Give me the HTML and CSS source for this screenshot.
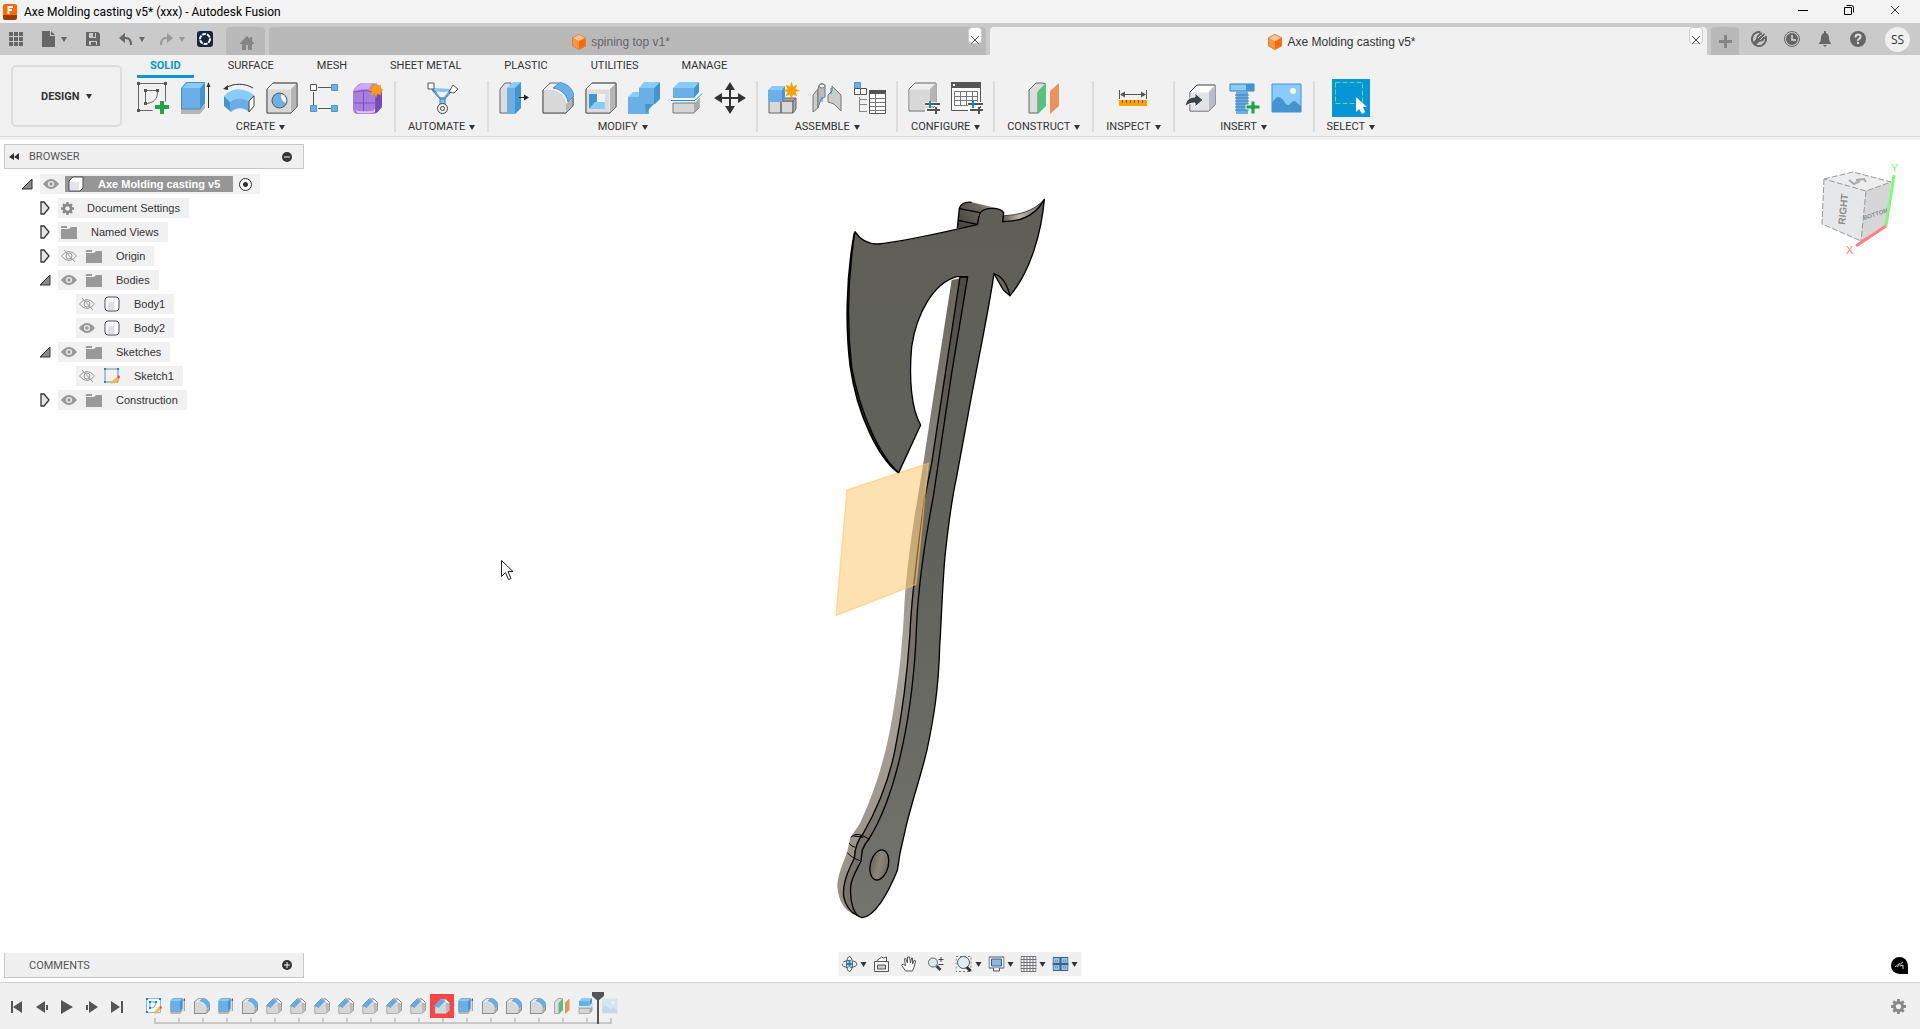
FILE: index.html
```html
<!DOCTYPE html>
<html lang="en">
<head>
  <meta charset="UTF-8">
  <meta name="viewport" content="width=device-width, initial-scale=1.0">
  <title>Axe Molding casting v5* (xxx) - Autodesk Fusion</title>
  <link rel="stylesheet" href="styles.css">
</head>
<body>

<!-- icon sprite -->
<svg class="sprite" aria-hidden="true">
  <symbol id="cube" viewBox="0 0 16 16">
    <path d="M8 0l7 3.5L8 7 1 3.500z" fill="#ffc59c"/><path d="M1 3.500L8 7v9l-7-4z" fill="#ff934a"/><path d="M15 3.500L8 7v9l7-4z" fill="#ff6a00"/>
    <path d="M8 .5l6.500 3.200v8L8 15.500l-6.500-3.800v-8z" fill="none" stroke="#d9823f"/>
  </symbol>
  <symbol id="sketch" viewBox="0 0 32 32">
    <path d="M1.500 1.500h27v18M1.500 1.500v27h14" fill="none" stroke="#666"/>
    <path d="M8.500 8.500h12M8.500 8.500v13M20.500 10c0 7-4 11-11 11.500" fill="none" stroke="#666"/>
    <path d="M0 0h3v3H0zM27 0h3v3h-3zM0 27h3v3H0zM7 7h3v3H7zM19 7h3v3h-3zM7 20h3v3H7z" fill="#555"/>
    <path d="M23 19h4v4h5v4h-5v5h-4v-5h-5v-4h5z" fill="#1fa54a"/>
  </symbol>
  <symbol id="extrude" viewBox="0 0 32 32">
    <path d="M1 27h19l5-5v4l-5 6H1z" fill="#b5b5b5"/>
    <path d="M1 6h19v21H1z" fill="#6ab0e6"/><path d="M1 6l5-6h19l-5 6z" fill="#88cbff"/><path d="M20 6l5-6v21l-5 6z" fill="#4494cf"/>
    <path d="M1.500 6.500l5-6h18v20.500l-4.500 6h-18.500z" fill="none" stroke="#4b8fc2"/>
    <path d="M28.500 4v22" stroke="#333"/><path d="M28.500 0l2 5h-4z" fill="#333"/>
  </symbol>
  <symbol id="revolve" viewBox="0 0 32 32">
    <path d="M3 6c7-5 19-5 27 0" fill="none" stroke="#333"/><path d="M0 7l5-4v5z" fill="#333"/>
    <path d="M1 14c8-9 21-9 31 0l-6 6c-6-5-13-5-19 0z" fill="#88cbff"/><path d="M7 20c6-5 13-5 19 0v10c-6-5-12-5-18 0z" fill="#6ab0e6"/><path d="M1 14l6 6 1 10-7-6z" fill="#4494cf"/>
    <path d="M26 19l5-5v10l-5 6z" fill="#fff" stroke="#444"/>
  </symbol>
  <symbol id="hole" viewBox="0 0 32 32">
    <path d="M1 7l6-6h24v24l-6 6H1z" fill="#eee" stroke="#666"/><path d="M25 7l6-6v24l-6 6z" fill="#b5b5b5"/><path d="M1.500 7.500h23V31h-23z" fill="#d8d8d8"/>
    <circle cx="13.500" cy="18.500" r="7.500" fill="#6ab0e6" stroke="#555"/><path d="M15 12a7 7 0 0 1 5 9 8 8 0 0 1-5-9z" fill="#f5f5f5"/>
    <path d="M1 7l6-6h24v24l-6 6H1z" fill="none" stroke="#666"/>
  </symbol>
  <symbol id="pattern" viewBox="0 0 32 32">
    <path d="M9 5.500h13M9 26.500h13M4.500 10v13" stroke="#555"/><path d="M1.500 2.500h6v6h-6z" fill="#fff" stroke="#555"/>
    <path d="M22.500 2.500h6v6h-6zM1.500 23.500h6v6h-6zM22.500 23.500h6v6h-6z" fill="#6ab0e6" stroke="#4b94ce"/>
  </symbol>
  <symbol id="star" viewBox="0 0 16 16">
    <path d="M8 0l1.500 4.300L13.600 2.400l-1.900 4.100L16 8l-4.300 1.500 1.900 4.100-4.100-1.900L8 16l-1.500-4.300-4.100 1.900 1.900-4.100L0 8l4.300-1.500-1.900-4.100 4.100 1.900z" fill="#fa9f00"/>
  </symbol>
  <symbol id="form" viewBox="0 0 32 32">
    <path d="M1 10q0-3 3-5 3-4 7-4h10q9 2 9 8v15q0 2-3 4-2 4-6 4H6q-5 0-5-5z" fill="#a87fe0"/><path d="M2 9q1-3 4-5 3-3 6-3h9l-4 6q-9 0-15 2z" fill="#c9aaf5"/><path d="M24 12l6-1v12q0 3-2 4-2 4-5 4z" fill="#7749b5"/>
    <path d="M2 21h22M11.500 9v22M2 10q10-3 21 0 2 10 0 21" fill="none" stroke="#7d50bb"/>
    <path d="M3 28q4 2 18 1l2-3v4q-4 2-17 1z" fill="#dcc8fa"/>
    <use href="#star" x="16" y="0" width="16" height="16"/>
  </symbol>
  <symbol id="automate" viewBox="0 0 32 32">
    <path d="M6 6c4 6 6 9 8 10v8c-1 4 5 4 5 0v-8c2-1 4-4 8-9" fill="#85c6f6" stroke="#3a7fb5" stroke-width="1"/><path d="M6 8q10 6 20 0l-7 9h-5z" fill="#6ab0e6" stroke="#3a7fb5"/><path d="M10 9q6 2 13 0l-5 6h-4z" fill="#f1f1f1"/>
    <path d="M2 1h6v6H2z" fill="#fff" stroke="#555"/><path d="M27 3l5 4-4 4-5-1z" fill="#fff" stroke="#555"/>
    <circle cx="16.500" cy="26.500" r="5" fill="#eee" stroke="#444"/><circle cx="16.500" cy="26.500" r="2" fill="none" stroke="#444"/>
  </symbol>
  <symbol id="presspull" viewBox="0 0 32 32">
    <path d="M1 7l5-6h6v30H1z" fill="#ddd" stroke="#666"/><path d="M8 6l6-6h8v26l-6 6H8z" fill="#88cbff"/><path d="M8 6h8v26H8z" fill="#6ab0e6"/><path d="M16 6l6-6v26l-6 6z" fill="#4494cf"/>
    <path d="M20 15.500h7" stroke="#222"/><path d="M25 12.500l5 3-5 3z" fill="#222"/>
  </symbol>
  <symbol id="fillet" viewBox="0 0 32 32">
    <path d="M1 8l7-7h8c10 2 15 8 15 15v8l-7 7H1z" fill="#f0f0f0" stroke="#666"/><path d="M1.500 8H11c9 2 13 8 13 14v8.500H1.500z" fill="#d8d8d8"/><path d="M24 22l7-6v8l-7 7z" fill="#b5b5b5"/>
    <path d="M11 6l7-5.500C27 2 31 8 32 14l-6 6C25 13 19 7 11 6z" fill="#6ab0e6" stroke="#4b94ce"/>
    <path d="M8 1L1 8v23h23l7-7v-8" fill="none" stroke="#666"/>
  </symbol>
  <symbol id="shell" viewBox="0 0 32 32">
    <path d="M1 7l6-6h24v24l-6 6H1z" fill="#f3f3f3" stroke="#666"/><path d="M25 7l6-6v24l-6 6z" fill="#b5b5b5"/><path d="M1.500 7.500h23V31h-23z" fill="#ddd"/>
    <path d="M4 12h16v15H4z" fill="#f7f7f7"/><path d="M4 12h8v9l-8 6z" fill="#4494cf"/><path d="M4 27l6-7h10v7z" fill="#88cbff"/><path d="M12 12h8v8h-8z" fill="#f1f1f1"/>
    <path d="M1 7l6-6h24v24l-6 6H1z" fill="none" stroke="#666"/>
  </symbol>
  <symbol id="combine" viewBox="0 0 32 32">
    <path d="M0 15h11V6h15v16h-5v10H0z" fill="#6ab0e6"/><path d="M0 15l5-5h6v5zM11 6l5-6h16l-6 6z" fill="#88cbff"/><path d="M26 6l6-6v17l-5 5h-1zM17 22h9l-4 4v0l-4 6z" fill="#4494cf"/>
  </symbol>
  <symbol id="split" viewBox="0 0 32 32">
    <path d="M2 21h21l5-5v10l-5 5H2z" fill="#d5d5d5" stroke="#777"/><path d="M23 21l5-5v10l-5 5z" fill="#aaa"/>
    <path d="M2 6h21v10H2z" fill="#6ab0e6"/><path d="M2 6l6-6h20l-5 6z" fill="#88cbff"/><path d="M23 6l5-6v10l-5 6z" fill="#4494cf"/>
    <path d="M0 18.500h24l7-7" fill="none" stroke="#fff" stroke-width="3"/><path d="M0 18.500h24l7-7" fill="none" stroke="#008fe0"/>
  </symbol>
  <symbol id="move" viewBox="0 0 32 32">
    <path d="M16 4v24M4 16h24" stroke="#333" stroke-width="2"/><path d="M16 0l5 8H11zM16 32l5-8H11zM0 16l8-5v10zM32 16l-8-5v10z" fill="#333"/>
  </symbol>
  <symbol id="component" viewBox="0 0 32 32">
    <path d="M1 19h12v12H1zM13 19h12v12H13z" fill="#d8d8d8" stroke="#666"/><path d="M13 19l4-3h11l-3 3zM25 19l3-3v11l-3 4z" fill="#aaa" stroke="#666"/>
    <path d="M0 8h14v12H0z" fill="#6ab0e6"/><path d="M0 8l4-4h13l-3 4z" fill="#88cbff"/><path d="M14 8l3-4v11l-3 4z" fill="#4494cf"/>
    <use href="#star" x="15" y="0" width="17" height="17"/>
  </symbol>
  <symbol id="joint" viewBox="0 0 32 32">
    <path d="M2 13l5-6v19l-5 4zM30 13l-9-9v5l-4 4v7l6 2 7 7z" fill="#ccc" stroke="#777"/><path d="M7 8l1-5q3-3 6 0v12l-4 2-3 9z" fill="#bbb" stroke="#777"/><ellipse cx="11" cy="4" rx="3" ry="2" fill="#eee" stroke="#777"/>
    <path d="M11 15v5M20 6v6" stroke="#008fe0"/>
  </symbol>
  <symbol id="bom" viewBox="0 0 32 32">
    <path d="M.5.500h6v6h-6z" fill="#6ab0e6" stroke="#4b94ce"/><path d="M.5 6.500h6v6h-6zM6.500 6.500h6v6h-6z" fill="#fff" stroke="#555"/>
    <path d="M5.500 15v15M6 17.500h7M6 22.500h7M6 29.500h7" fill="none" stroke="#888"/>
    <path d="M15.500 9.500h16v22h-16z" fill="#fff" stroke="#555"/><path d="M15 8h17v4H15z" fill="#555"/><path d="M16 16.500h15M16 20.500h15M16 24.500h15M16 28.500h15M21.500 12v19" stroke="#777"/>
  </symbol>
  <symbol id="sliders" viewBox="0 0 16 14">
    <path d="M0 4h15M0 10h15" stroke="#fff" stroke-width="4"/><path d="M0 4h15M2 10h14" stroke="#555" stroke-width="2"/><path d="M5 1v7" stroke="#008fe0" stroke-width="2"/><path d="M11 7v7" stroke="#555" stroke-width="2"/>
  </symbol>
  <symbol id="configure" viewBox="0 0 32 32">
    <path d="M1 7l6-6h21v22l-6 6H1z" fill="#eee" stroke="#666"/><path d="M22 7l6-6v22l-6 5z" fill="#b5b5b5"/><path d="M1.500 7.500H22v20.500H1.500z" fill="#d8d8d8"/>
    <use href="#sliders" x="17" y="18" width="16" height="14"/>
  </symbol>
  <symbol id="configtable" viewBox="0 0 32 32">
    <path d="M.5 2.500h29v26H.5z" fill="#fff" stroke="#555"/><path d="M0 0h30v6H0z" fill="#555"/><path d="M2 2h2v2H2z" fill="#fff"/>
    <path d="M3.500 9.500h23v14h-23zM3.500 14.500h23M3.500 18.500h23M9.500 9v15M15.500 9v15M21.500 9v15" fill="none" stroke="#777"/>
    <use href="#sliders" x="17" y="18" width="16" height="14"/>
  </symbol>
  <symbol id="plane" viewBox="0 0 32 32">
    <path d="M1 8l7-7h6l4 1-8 8v21H1z" fill="#ddd" stroke="#666"/><path d="M10 9l8-8v23l-8 8z" fill="#54c47c"/><path d="M22 9l9-8v23l-9 8z" fill="#e9935b"/>
  </symbol>
  <symbol id="measure" viewBox="0 0 32 32">
    <path d="M2.500 8v9M29.500 8v9M4 12.500h24" stroke="#555"/><path d="M3 12.500l5-3v6zM29 12.500l-5-3v6z" fill="#555"/>
    <path d="M2 18h28v6H2z" fill="#faa200"/><path d="M5.500 18v3M9.500 18v3M13.500 18v3M17.500 18v3M21.500 18v3M25.500 18v3" stroke="#7a5200"/>
  </symbol>
  <symbol id="derive" viewBox="0 0 32 32">
    <path d="M5 10l7-7h18v20l-6 6H5z" fill="#fff" stroke="#3c434d"/><path d="M24 10l6-7v20l-6 6z" fill="#b8bcc6"/><path d="M5.500 10.500H24v18H5.500z" fill="#e1e3e9"/>
    <path d="M0 25c1-8 5-10 10-10v-4l8 7-8 7v-4c-4 0-7 1-10 4z" fill="#3c434d" stroke="#fff"/>
  </symbol>
  <symbol id="bolt" viewBox="0 0 32 32">
    <path d="M2 2h24v7H2z" fill="#88cbff" stroke="#3c7db1"/><path d="M18 2h8v7h-8z" fill="#4494cf"/><path d="M8 9h12v23H8z" fill="#6ab0e6"/>
    <path d="M7 13h14M7 16h14M7 19h14M7 22h14M7 25h14M7 28h14" stroke="#3c7db1"/><path d="M23 19h4v4h5v4h-5v5h-4v-5h-5v-4h5z" fill="#1fa54a" stroke="#eee"/>
  </symbol>
  <symbol id="image" viewBox="0 0 32 32">
    <path d="M1 2h29v28H1z" fill="#88cbff" stroke="#4494cf"/><circle cx="22" cy="9" r="3" fill="#fff5cc"/>
    <path d="M1 21c6-10 9-6 14 1 2 2 3 1 5-1q4-4 6 0l4 3v6H1z" fill="#4494cf"/>
  </symbol>
  <symbol id="select" viewBox="0 0 38 38">
    <path d="M3.500 3.500h27v21h-27z" fill="none" stroke="#5fdc7e" stroke-dasharray="5 2"/><path d="M24 18v15l3-3 3 5 3-2-2-5h4z" fill="#fff"/>
  </symbol>
  <symbol id="chamfer" viewBox="0 0 32 32">
    <path d="M2 14L14 2h10l7 7v15l-7 7H2z" fill="#eee" stroke="#888" stroke-width="2"/><path d="M3 20l8-2L22 9h2v22H3z" fill="#d6d6d6"/><path d="M24 9l7 2v13l-7 7z" fill="#bbb"/>
    <path d="M0 16L13 3h5l5 3L9 20z" fill="#63ade6"/>
  </symbol>
  <symbol id="eye" viewBox="0 0 16 12">
    <path d="M0 6q4-5 8-5t8 5q-4 5-8 5T0 6z" fill="#999"/><circle cx="8" cy="6" r="3" fill="#eee"/><circle cx="8" cy="6" r="1.800" fill="#999"/>
  </symbol>
  <symbol id="eyeoff" viewBox="0 0 16 12">
    <path d="M.5 6Q4 1.500 8 1.500T15.500 6Q12 10.500 8 10.500T.5 6z" fill="none" stroke="#999"/><circle cx="8" cy="6" r="3" fill="none" stroke="#999"/><path d="M3 0l11 12" stroke="#999"/>
  </symbol>
  <symbol id="folder" viewBox="0 0 16 14">
    <path d="M0 1h6v2H0zM0 4h8l2-2h6v12H0z" fill="#999"/>
  </symbol>
  <symbol id="gear" viewBox="0 0 16 16">
    <path d="M8 0v16M0 8h16M2.500 2.500l11 11M13.500 2.500l-11 11" stroke="currentColor" stroke-width="3"/><circle cx="8" cy="8" r="4.500" fill="none" stroke="currentColor" stroke-width="3"/><circle cx="8" cy="8" r="2.800" fill="#f0f0f0"/>
  </symbol>
  <symbol id="body" viewBox="0 0 16 16">
    <path d="M1 4q0-3 3-3h8q3 0 3 3v8q0 3-3 3H4q-3 0-3-3z" fill="#fff" stroke="#4a4f58"/><path d="M4 6h6v8H4z" fill="#dfe0e6"/>
  </symbol>
  <symbol id="sketchitem" viewBox="0 0 16 16">
    <path d="M1 1h13v13H1z" fill="none" stroke="#888"/><path d="M0 0h2v2H0zM13 0h2v2h-2zM0 13h2v2H0z" fill="#0a8fe0"/>
    <path d="M7 16l1-3 5-4 2 2-5 4z" fill="#f7bd2f"/><path d="M13 9l2-2 1 2-1 2z" fill="#f04040"/>
  </symbol>
  <symbol id="sketchfeature" viewBox="0 0 16 16">
    <path d="M.5.500h14v14H.5z" fill="#fff" stroke="#88b8dc"/><path d="M4 4h6q0 6-6 6z" fill="none" stroke="#5b9fd0"/>
    <path d="M0 0h2v2H0zM13 0h2v2h-2zM0 13h2v2H0zM3 3h2v2H3zM9 3h2v2H9zM3 9h2v2H3z" fill="#0a8fe0"/><path d="M8 16l1-3 4-4 2 2-4 4z" fill="#f7bd2f"/><path d="M13 9l2-1 1 2-1 1z" fill="#f04040"/>
  </symbol>
  <symbol id="closed" viewBox="0 0 12 14"><path d="M2 1l3 0 5 6-5 6H2z" fill="#e4e4e4" stroke="#333" stroke-width="1.300"/></symbol>
  <symbol id="open" viewBox="0 0 12 12"><path d="M11 1v10H1z" fill="#888" stroke="#333"/></symbol>
  <symbol id="close" viewBox="0 0 10 10"><path d="M1 1l8 8M9 1l-8 8" stroke="currentColor"/></symbol>
</svg>

<header class="titlebar">
  <svg class="app-logo" viewBox="0 0 14 16"><rect width="14" height="12" rx="2" fill="#ff6a00"/><path d="M0 11h14v3q0 2-2 2H2q-2 0-2-2z" fill="#993d00"/><path d="M5 3h5M5 6h4M5.500 2v8" stroke="#fff" stroke-width="2"/></svg>
  <h1>Axe Molding casting v5* (xxx) - Autodesk Fusion</h1>
  <div class="window-buttons">
    <button aria-label="Minimize"><svg width="10" height="10"><path d="M0 5.500h10" stroke="#000"/></svg></button>
    <button aria-label="Restore"><svg width="10" height="10"><path d="M.5 2.500h7v7h-7zM2.500.5h5q2 0 2 2v5" fill="none" stroke="#000"/></svg></button>
    <button aria-label="Close"><svg width="10" height="10"><use href="#close"/></svg></button>
  </div>
</header>

<div class="tabstrip">
  <div class="quick">
    <button aria-label="Data panel"><svg width="14" height="14"><path d="M0 0h4v4H0zM5 0h4v4H5zM10 0h4v4h-4zM0 5h4v4H0zM5 5h4v4H5zM10 5h4v4h-4zM0 10h4v4H0zM5 10h4v4H5zM10 10h4v4h-4z" fill="#666"/></svg></button>
    <button class="menu" aria-label="File"><svg width="13" height="16"><path d="M0 0h8v5h5v11H0zM9 0l4 4H9z" fill="#666"/></svg><span class="caret"></span></button>
    <button aria-label="Save"><svg width="14" height="14"><path d="M0 0h12l2 2v12H0z" fill="#666"/><path d="M3 1h7v5H3zM3 9h8v4H3z" fill="#cacaca"/><path d="M7 1h2v4H7zM5 10h5v3H5z" fill="#666"/></svg></button>
    <button class="menu" aria-label="Undo"><svg width="14" height="14"><path d="M2 6h5q5 0 5 7" fill="none" stroke="#666" stroke-width="2"/><path d="M0 6l6-5v10z" fill="#666"/></svg><span class="caret"></span></button>
    <button class="menu redo" aria-label="Redo"><svg width="14" height="14"><path d="M12 6H7q-5 0-5 7" fill="none" stroke="#999" stroke-width="2"/><path d="M14 6L8 1v10z" fill="#999"/></svg><span class="caret"></span></button>
    <button aria-label="Add-in"><svg width="16" height="16"><rect width="16" height="16" rx="3" fill="#14263d"/><circle cx="8" cy="8" r="5" fill="none" stroke="#fff" stroke-width="2" stroke-dasharray="4 1"/></svg></button>
  </div>
  <button class="home-tab" aria-label="Home"><svg width="14" height="14"><path d="M7 0l3 3V1h2v4l2 2v1h-2v6H8V9H6v5H2V8H0V7z" fill="#858585"/></svg></button>
  <div class="doc-tab">
    <a href="#" class="doc-title"><svg width="16" height="16"><use href="#cube"/></svg>spining top v1*</a>
    <button class="doc-close" aria-label="Close tab"><svg width="10" height="10"><use href="#close"/></svg></button>
  </div>
  <div class="doc-tab current">
    <a href="#" class="doc-title"><svg width="16" height="16"><use href="#cube"/></svg>Axe Molding casting v5*</a>
    <button class="doc-close" aria-label="Close tab"><svg width="10" height="10"><use href="#close"/></svg></button>
  </div>
  <button class="new-tab" aria-label="New design"><svg width="13" height="13"><path d="M6.500 0v13M0 6.500h13" stroke="#858585" stroke-width="3"/></svg></button>
  <div class="account">
    <button aria-label="Extensions"><svg width="16" height="16"><circle cx="8" cy="8" r="7" fill="none" stroke="#666" stroke-width="2" stroke-dasharray="37 7" transform="rotate(-25 8 8)"/><path d="M2 12l3-4 1-3 4-4 1 1-1 3 3-3 1 1-2 3h3l-3 4-4 1-3 3z" fill="#666"/><path d="M10 4L7 7M13 5l-4 4" stroke="#cacaca"/></svg></button>
    <button aria-label="Job status"><svg width="16" height="16"><circle cx="8" cy="8" r="7.500" fill="none" stroke="#666"/><circle cx="8" cy="8" r="6" fill="#666"/><path d="M8 4v5h4" fill="none" stroke="#ddd" stroke-width="1.500"/></svg></button>
    <button aria-label="Notifications"><svg width="16" height="16"><path d="M7 0h2v2q3 1 3 5t2 5v1H2v-1q2-1 2-5t3-5zM6 14h4l-2 2z" fill="#666"/></svg></button>
    <button aria-label="Help"><svg width="16" height="16"><circle cx="8" cy="8" r="8" fill="#666"/><path d="M5.500 6.500q0-3 2.500-3t2.500 2.300Q10.500 7 9 8t-1 2M8 11v2" fill="none" stroke="#ddd" stroke-width="2"/></svg></button>
    <button class="avatar">SS</button>
  </div>
</div>

<div class="ribbon">
  <label class="workspace">
    <select aria-label="Workspace"><option>DESIGN</option></select>
    <span class="caret"></span>
  </label>
  <div class="toolbar">
    <nav class="ribbon-tabs">
      <a href="#" class="active">SOLID</a>
      <a href="#">SURFACE</a>
      <a href="#">MESH</a>
      <a href="#">SHEET METAL</a>
      <a href="#">PLASTIC</a>
      <a href="#">UTILITIES</a>
      <a href="#">MANAGE</a>
    </nav>
    <div class="groups">
      <div class="group">
        <div class="tools">
          <button aria-label="Create Sketch"><svg><use href="#sketch"/></svg></button>
          <button aria-label="Extrude"><svg><use href="#extrude"/></svg></button>
          <button aria-label="Revolve"><svg><use href="#revolve"/></svg></button>
          <button aria-label="Hole"><svg><use href="#hole"/></svg></button>
          <button aria-label="Pattern"><svg><use href="#pattern"/></svg></button>
          <button aria-label="Create Form"><svg><use href="#form"/></svg></button>
        </div>
        <button class="group-label">CREATE<span class="caret"></span></button>
      </div>
      <div class="group single">
        <div class="tools"><button aria-label="Automate"><svg><use href="#automate"/></svg></button></div>
        <button class="group-label">AUTOMATE<span class="caret"></span></button>
      </div>
      <div class="group">
        <div class="tools">
          <button aria-label="Press Pull"><svg><use href="#presspull"/></svg></button>
          <button aria-label="Fillet"><svg><use href="#fillet"/></svg></button>
          <button aria-label="Shell"><svg><use href="#shell"/></svg></button>
          <button aria-label="Combine"><svg><use href="#combine"/></svg></button>
          <button aria-label="Split Body"><svg><use href="#split"/></svg></button>
          <button aria-label="Move"><svg><use href="#move"/></svg></button>
        </div>
        <button class="group-label">MODIFY<span class="caret"></span></button>
      </div>
      <div class="group">
        <div class="tools">
          <button aria-label="New Component"><svg><use href="#component"/></svg></button>
          <button aria-label="Joint"><svg><use href="#joint"/></svg></button>
          <button aria-label="Bill of Materials"><svg><use href="#bom"/></svg></button>
        </div>
        <button class="group-label">ASSEMBLE<span class="caret"></span></button>
      </div>
      <div class="group">
        <div class="tools">
          <button aria-label="Configure"><svg><use href="#configure"/></svg></button>
          <button aria-label="Configuration Table"><svg><use href="#configtable"/></svg></button>
        </div>
        <button class="group-label">CONFIGURE<span class="caret"></span></button>
      </div>
      <div class="group single">
        <div class="tools"><button aria-label="Offset Plane"><svg><use href="#plane"/></svg></button></div>
        <button class="group-label">CONSTRUCT<span class="caret"></span></button>
      </div>
      <div class="group single">
        <div class="tools"><button aria-label="Measure"><svg><use href="#measure"/></svg></button></div>
        <button class="group-label">INSPECT<span class="caret"></span></button>
      </div>
      <div class="group">
        <div class="tools">
          <button aria-label="Insert Derive"><svg><use href="#derive"/></svg></button>
          <button aria-label="Insert Fastener"><svg><use href="#bolt"/></svg></button>
          <button aria-label="Canvas"><svg><use href="#image"/></svg></button>
        </div>
        <button class="group-label">INSERT<span class="caret"></span></button>
      </div>
      <div class="group single">
        <div class="tools"><button class="select-tool" aria-label="Select"><svg><use href="#select"/></svg></button></div>
        <button class="group-label">SELECT<span class="caret"></span></button>
      </div>
    </div>
  </div>
</div>

<main class="viewport">
  <svg class="scene" viewBox="0 0 1920 842" role="img" aria-label="Axe model">
    <defs>
      <linearGradient id="face" x1="0" y1="0" x2="0" y2="1"><stop offset="0" stop-color="#5f5e59"/><stop offset=".5" stop-color="#61625c"/><stop offset="1" stop-color="#73746e"/></linearGradient>
      <linearGradient id="back" gradientUnits="userSpaceOnUse" x1="0" y1="300" x2="0" y2="2200"><stop offset="0" stop-color="#6b675e"/><stop offset=".3" stop-color="#86847f"/><stop offset=".6" stop-color="#a9a59c"/><stop offset="1" stop-color="#969083"/></linearGradient>
      <linearGradient id="side" gradientUnits="userSpaceOnUse" x1="0" y1="300" x2="0" y2="2200"><stop offset="0" stop-color="#4d4b44"/><stop offset=".5" stop-color="#76726a"/><stop offset="1" stop-color="#79746a"/></linearGradient>
      <linearGradient id="butt" x1="0" x2="1" y1=".5" y2="0"><stop offset="0" stop-color="#4e4b44"/><stop offset=".5" stop-color="#6c675d"/><stop offset="1" stop-color="#c5c2bb"/></linearGradient>
      <linearGradient id="horn"><stop offset="0" stop-color="#5f5a50"/><stop offset=".4" stop-color="#bab6ac"/><stop offset="1" stop-color="#6d685e"/></linearGradient>
      <linearGradient id="bore"><stop offset="0" stop-color="#6c675e"/><stop offset=".5" stop-color="#8b8579"/><stop offset="1" stop-color="#736e64"/></linearGradient>
    </defs>
    <!-- drawn at three times its size on the canvas -->
    <g transform="translate(800 40) scale(.3333)" stroke="#000" stroke-width="4" stroke-linejoin="round" fill="none">
      <path stroke="none" fill="url(#back)" d="M455 300L405 620 370 850 352 960 345 1000C330 1100 316 1200 312 1300C305 1420 295 1500 285 1560C265 1700 235 1810 180 1930L150 1975 142 2015C125 2060 112 2090 112 2120C115 2160 130 2190 165 2205L250 2100 300 1700 400 1100 490 580 503 290z"/>
      <path fill="url(#side)" d="M480 291L430 620 395 850 373 960C350 1130 333 1260 330 1360C322 1480 305 1610 285 1710C265 1810 230 1890 190 1960Q165 1990 163 2035C135 2090 128 2120 131 2150Q140 2190 170 2206L300 1900 345 1600 370 1400 400 1150 430 950 490 580 503 291z"/>
      <path fill="#fcc463" fill-opacity=".5" stroke="#ffc765" stroke-opacity=".6" d="M141 930L385 850 348 1213 108 1307z"/>
      <path fill="url(#butt)" stroke="none" d="M472 145L478 85Q485 64 515 67L606 88 532 140z"/>
      <path d="M472 145L478 85Q485 64 515 67M478 86L540 98M475 121L532 133"/>
      <path fill="url(#horn)" stroke-width="2" d="M611 107C655 105 700 95 733 58C720 130 655 135 608 125z"/>
      <path fill="#6d675b" d="M582 281C600 262 630 270 630 347L610 330z"/>
      <path fill="#3c3c38" stroke-width="5" d="M163 160C137 300 137 450 151 560C172 705 234 830 292 876L250 600z"/>
      <path fill="url(#face)" d="M165 155C180 178 200 192 232 192C300 188 420 160 532 134Q535 112 541 98C555 80 600 82 611 98L608 125C655 125 705 110 733 58C725 150 695 270 630 347C622 315 605 288 582 281C565 400 530 560 505 700L470 890C455 960 440 1080 434 1140C426 1240 424 1330 419 1400C416 1530 400 1620 381 1710C365 1780 340 1850 318 1940L300 2020 292 2072C262 2145 222 2213 186 2213C162 2210 149 2168 152 2120C155 2090 172 2068 183 2043L187 2010Q195 1990 207 1977C255 1900 285 1800 305 1710C325 1620 345 1480 350 1330C355 1230 375 1080 400 950L455 580 503 290H470C400 310 350 400 335 500C326 600 335 690 362 735L296 878C240 830 180 700 155 560C140 430 142 300 165 155z"/>
      <path stroke-width="3" d="M153 1972Q168 1952 208 1978M160 1968L190 1972M147 1990Q155 2000 166 2002M142 2018Q152 2032 184 2044"/>
      <ellipse cx="238" cy="2055" rx="27" ry="46" transform="rotate(14 238 2055)" fill="url(#bore)"/>
    </g>
    <path d="M501.500 420.500v16l4-4 3 7 2.500-1-3-7h5z" fill="#fff" stroke="#222"/>
  </svg>

  <section class="panel browser">
    <div class="panel-head">
      <svg width="10" height="8"><path d="M5 0v7L0 4zM10 0v7L5 4z" fill="#333"/></svg>
      <h2>BROWSER</h2>
      <button aria-label="Collapse browser"><svg width="10" height="10"><circle cx="5" cy="5" r="5" fill="#333"/><path d="M2 5h6" stroke="#fff"/></svg></button>
    </div>
    <ul class="tree">
      <li>
        <div class="row"><span class="arrow"><svg width="12" height="12"><use href="#open"/></svg></span>
          <div class="node root"><svg width="16" height="12"><use href="#eye"/></svg>
            <span class="root-name"><svg width="16" height="16"><path d="M1 5l4-4h10v11l-3 3H1z" fill="#fff" stroke="#4a4f58"/><path d="M2 6h9v8H2z" fill="#e4e4ea"/></svg>Axe Molding casting v5</span>
            <input type="radio" aria-label="Activate component" checked></div></div>
        <ul>
          <li><div class="row"><span class="arrow"><svg width="12" height="14"><use href="#closed"/></svg></span>
            <div class="node"><svg class="settings" width="13" height="13"><use href="#gear"/></svg><span>Document Settings</span></div></div></li>
          <li><div class="row"><span class="arrow"><svg width="12" height="14"><use href="#closed"/></svg></span>
            <div class="node"><svg width="16" height="14"><use href="#folder"/></svg><span>Named Views</span></div></div></li>
          <li><div class="row"><span class="arrow"><svg width="12" height="14"><use href="#closed"/></svg></span>
            <div class="node"><svg width="16" height="12"><use href="#eyeoff"/></svg><svg width="16" height="14"><use href="#folder"/></svg><span>Origin</span></div></div></li>
          <li><div class="row"><span class="arrow"><svg width="12" height="12"><use href="#open"/></svg></span>
            <div class="node"><svg width="16" height="12"><use href="#eye"/></svg><svg width="16" height="14"><use href="#folder"/></svg><span>Bodies</span></div></div>
            <ul>
              <li><div class="row"><span class="arrow"></span><div class="node"><svg width="16" height="12"><use href="#eyeoff"/></svg><svg width="16" height="16"><use href="#body"/></svg><span>Body1</span></div></div></li>
              <li><div class="row"><span class="arrow"></span><div class="node"><svg width="16" height="12"><use href="#eye"/></svg><svg width="16" height="16"><use href="#body"/></svg><span>Body2</span></div></div></li>
            </ul>
          </li>
          <li><div class="row"><span class="arrow"><svg width="12" height="12"><use href="#open"/></svg></span>
            <div class="node"><svg width="16" height="12"><use href="#eye"/></svg><svg width="16" height="14"><use href="#folder"/></svg><span>Sketches</span></div></div>
            <ul>
              <li><div class="row"><span class="arrow"></span><div class="node"><svg width="16" height="12"><use href="#eyeoff"/></svg><svg width="16" height="16"><use href="#sketchitem"/></svg><span>Sketch1</span></div></div></li>
            </ul>
          </li>
          <li><div class="row"><span class="arrow"><svg width="12" height="14"><use href="#closed"/></svg></span>
            <div class="node"><svg width="16" height="12"><use href="#eye"/></svg><svg width="16" height="14"><use href="#folder"/></svg><span>Construction</span></div></div></li>
        </ul>
      </li>
    </ul>
  </section>

  <svg class="viewcube" width="90" height="100" role="img" aria-label="View cube">
    <path d="M13 19L42 12 80 22 55 31z" fill="#ededed"/>
    <path d="M13 19L55 31 50 81 11 64z" fill="#e6e7e9"/>
    <path d="M55 31L80 22 75 66 50 81z" fill="#d6d6d6"/>
    <path d="M13 19L42 12 80 22 55 31zM13 19L11 64 50 81 75 66M55 31L50 81" fill="none" stroke="#999" stroke-dasharray="6 2"/>
    <text class="cube-face" transform="translate(34 65) rotate(-84)">RIGHT</text>
    <text class="cube-face bottom" transform="translate(53 60) rotate(-18)">BOTTOM</text>
    <path d="M38 20l5 4 6-3M45 20l8-1 2 3" fill="none" stroke="#aaa" stroke-width="2"/>
    <path d="M75 66L83 15" stroke="#80f880" stroke-width="3"/><path d="M75 66L45 86" stroke="#ff8080" stroke-width="3"/>
    <text class="axis-y" x="80" y="12">Y</text><text class="axis-x" x="35" y="94">X</text>
  </svg>

  <section class="panel comments">
    <div class="panel-head">
      <h2>COMMENTS</h2>
      <button aria-label="Add comment"><svg width="10" height="10"><circle cx="5" cy="5" r="5" fill="#333"/><path d="M2 5h6M5 2v6" stroke="#fff"/></svg></button>
    </div>
  </section>

  <div class="navbar">
    <button class="menu" aria-label="Orbit"><svg width="16" height="16"><ellipse cx="8" cy="8" rx="7.500" ry="3.500" fill="none" stroke="#555" stroke-dasharray="8 2"/><ellipse cx="8" cy="8" rx="3" ry="7.500" fill="none" stroke="#555"/><path d="M5 8h6M8 5v6" stroke="#008fe0" stroke-width="2"/></svg><span class="caret"></span></button>
    <button aria-label="Look At"><svg width="16" height="16"><path d="M1 5.500h14v10H1zM3 5l5-4 2 1 3-1v4" fill="#f4f4f4" stroke="#555"/><path d="M4 9h8v4H4z" fill="#ccc" stroke="#555"/></svg></button>
    <button aria-label="Pan"><svg width="16" height="16"><path d="M5 15L1 9l2-1 2 2-1-7 1-1 2 5V1l2 0 1 6 1-5 1 0v6l2-4 1 1-1 5-2 5z" fill="#fff" stroke="#555"/></svg></button>
    <button aria-label="Zoom"><svg width="17" height="16"><circle cx="5.500" cy="6.500" r="4.500" fill="#dcebf2" stroke="#666"/><path d="M9 10l4 4" stroke="#444" stroke-width="3"/><path d="M11 3.500h5M13.500 1v5M11 8.500h5" stroke="#444"/></svg></button>
    <button class="menu" aria-label="Zoom window"><svg width="17" height="16"><path d="M.5.500h15v15H.5z" fill="none" stroke="#777" stroke-dasharray="2 2"/><circle cx="8" cy="6.500" r="6" fill="#dfedf0" stroke="#555"/><path d="M11 11l4 4" stroke="#333" stroke-width="3"/></svg><span class="caret"></span></button>
    <button class="menu" aria-label="Display settings"><svg width="16" height="16"><path d="M.5 1h15v11H.5z" fill="#fff" stroke="#555"/><path d="M3 3h10v7H3z" fill="#8eb8dc" stroke="#2f5f94"/><path d="M5 12v3h6v-3" fill="#eee" stroke="#555"/></svg><span class="caret"></span></button>
    <button class="menu" aria-label="Grid and snaps"><svg width="16" height="16"><path d="M.5.500h15v15H.5zM3.500 0v16M6.500 0v16M9.500 0v16M12.500 0v16M0 3.500h16M0 6.500h16M0 9.500h16M0 12.500h16" fill="#fff" stroke="#707078"/></svg><span class="caret"></span></button>
    <button class="menu" aria-label="Viewports"><svg width="16" height="14"><path d="M.5.500h15v13H.5z" fill="#9cc3e4" stroke="#385f8d"/><path d="M8 0v14M0 7h16" stroke="#385f8d" stroke-width="2"/><path d="M3 3h2v2H3zM11 3h2v2h-2zM3 9h2v2H3zM11 9h2v2h-2z" fill="#bdd9ef" stroke="#6d98c0"/></svg><span class="caret"></span></button>
  </div>

  <button class="assistant" aria-label="Assistant"><svg width="17" height="17"><path d="M8.500 0a8.500 8.500 0 0 1 8.500 8.500V17H8.500a8.500 8.500 0 0 1 0-17z" fill="#000"/><path d="M4 10l5-4M6 10l6-5M9 9l3-1v4" fill="none" stroke="#ccc"/></svg></button>
</main>

<footer class="timeline">
  <div class="playback">
    <button aria-label="Go to start"><svg width="12" height="12"><path d="M0 0h2v12H0zM11 0v12L2 6z" fill="#555"/></svg></button>
    <button aria-label="Step back"><svg width="12" height="12"><path d="M9 0v12L0 6zM10 4h2v5h-2z" fill="#555"/></svg></button>
    <button aria-label="Play"><svg width="12" height="14"><path d="M0 0v14l12-7z" fill="#555"/></svg></button>
    <button aria-label="Step forward"><svg width="12" height="12"><path d="M3 0v12l9-6zM0 4h2v5H0z" fill="#555"/></svg></button>
    <button aria-label="Go to end"><svg width="12" height="12"><path d="M0 0v12l9-6zM10 0h2v12h-2z" fill="#555"/></svg></button>
  </div>
  <div class="features">
    <button aria-label="Sketch1"><svg><use href="#sketchfeature"/></svg></button>
    <button aria-label="Extrude1"><svg><use href="#extrude"/></svg></button>
    <button aria-label="Fillet1"><svg><use href="#fillet"/></svg></button>
    <button aria-label="Extrude2"><svg><use href="#extrude"/></svg></button>
    <button aria-label="Fillet2"><svg><use href="#fillet"/></svg></button>
    <button aria-label="Chamfer1"><svg><use href="#chamfer"/></svg></button>
    <button aria-label="Chamfer2"><svg><use href="#chamfer"/></svg></button>
    <button aria-label="Chamfer3"><svg><use href="#chamfer"/></svg></button>
    <button aria-label="Chamfer4"><svg><use href="#chamfer"/></svg></button>
    <button aria-label="Chamfer5"><svg><use href="#chamfer"/></svg></button>
    <button aria-label="Chamfer6"><svg><use href="#chamfer"/></svg></button>
    <button aria-label="Chamfer7"><svg><use href="#chamfer"/></svg></button>
    <button class="error" aria-label="Chamfer8"><svg><use href="#chamfer"/></svg></button>
    <button aria-label="Extrude3"><svg><use href="#extrude"/></svg></button>
    <button aria-label="Fillet3"><svg><use href="#fillet"/></svg></button>
    <button aria-label="Fillet4"><svg><use href="#fillet"/></svg></button>
    <button aria-label="Fillet5"><svg><use href="#fillet"/></svg></button>
    <button aria-label="Plane1"><svg><use href="#plane"/></svg></button>
    <button aria-label="Split Body1"><svg><use href="#split"/></svg><span class="marker"></span></button>
    <button class="rolled-back" aria-label="Canvas1"><svg><use href="#image"/></svg></button>
  </div>
  <button class="timeline-settings" aria-label="Timeline settings"><svg width="15" height="15"><use href="#gear"/></svg></button>
</footer>

</body>
</html>
```
FILE: styles.css
```css
* {
  box-sizing: border-box;
}

body {
  margin: 0;
  min-height: 100vh;
  display: flex;
  flex-direction: column;
  background: #fff;
  color: #333;
  font-family: "Liberation Sans", Arial, sans-serif;
  font-size: 11px;
}

h1,
h2,
ul {
  margin: 0;
  padding: 0;
  font-weight: normal;
  list-style: none;
}

button {
  display: flex;
  align-items: center;
  justify-content: center;
  margin: 0;
  padding: 0;
  border: none;
  background: none;
  color: inherit;
  font: inherit;
  cursor: pointer;
}

a {
  color: inherit;
  text-decoration: none;
}

svg {
  display: block;
  flex-shrink: 0;
}

.sprite {
  position: absolute;
  width: 0;
  height: 0;
}

.caret {
  border: 3px solid transparent;
  border-top: 5px solid #333;
  border-bottom: none;
}

/* title bar */
.titlebar {
  display: flex;
  align-items: center;
  height: 23px;
  padding-left: 3px;
  background: #f3f3f3;
}

.app-logo {
  width: 14px;
  height: 16px;
}

.titlebar h1 {
  flex: 1;
  margin-left: 7px;
  color: #000;
  font-family: Roboto, "Open Sans", sans-serif;
  font-size: 12px;
}

.window-buttons {
  display: flex;
  align-self: flex-start;
  padding-right: 2px;
}

.window-buttons button {
  width: 46px;
  height: 20px;
}

/* document tabs */
.tabstrip {
  display: flex;
  height: 32px;
  padding-top: 4px;
  background: #cacaca;
}

.quick {
  display: flex;
  align-items: center;
  gap: 19px;
  width: 226px;
  height: 24px;
  padding-left: 9px;
}

.quick .menu {
  gap: 6px;
}

.quick .redo {
  margin-left: -5px;
}

.quick .caret {
  border-top-color: #666;
}

.quick .redo .caret {
  border-top-color: #999;
}

.quick button:last-child {
  margin-left: -7px;
}

.home-tab {
  width: 39px;
  margin-right: 4px;
  padding: 4px 0 0 3px;
  border-radius: 4px 4px 0 0;
  background: #b9b9b9;
}

.doc-tab {
  display: flex;
  flex: 1;
  margin-right: 4px;
  padding: 0 4px;
  border-radius: 4px 4px 0 0;
  background: #b9b9b9;
  color: #666;
  font-size: 12px;
}

.doc-tab.current {
  background: #f1f1f1;
  color: #333;
}

.doc-title {
  display: flex;
  flex: 1;
  align-items: center;
  justify-content: center;
  gap: 4px;
  padding-top: 2px;
}

.doc-close {
  width: 14px;
  height: 17px;
  padding-top: 8px;
  border: 1px solid #ccc;
  border-radius: 4px;
  background: #fff;
  color: #555;
}

.new-tab {
  width: 28px;
  border-radius: 4px 4px 0 0;
  background: #b9b9b9;
}

.account {
  display: flex;
  align-items: center;
  gap: 17px;
  height: 24px;
  padding: 0 10px 0 12px;
}

.account .avatar {
  width: 25px;
  height: 25px;
  margin-left: 2px;
  border-radius: 50%;
  background: #f0f0f0;
  font-family: "Open Sans", sans-serif;
  font-size: 12px;
}

/* ribbon */
.ribbon {
  display: flex;
  height: 85px;
  background: linear-gradient(#d9d9d9, #d9d9d9) 0 81px / 100% 1px no-repeat #f1f1f1;
  font-family: Roboto, Arial, sans-serif;
  font-size: 11px;
}

.workspace {
  display: flex;
  align-items: center;
  justify-content: center;
  gap: 6px;
  width: 111px;
  height: 62px;
  margin: 10px 15px 0 11px;
  border: 2px solid #ddd;
  border-radius: 5px;
}

.workspace select {
  appearance: none;
  padding: 0;
  border: none;
  background: none;
  color: #333;
  font: inherit;
  font-weight: bold;
}

.ribbon-tabs {
  display: flex;
  gap: 17px;
  height: 23px;
}

.ribbon-tabs a {
  padding: 4px 13px 0;
  line-height: 14px;
}

.ribbon-tabs .active {
  margin-right: 4px;
  border-bottom: 3px solid #0696d7;
  color: #0696d7;
  font-weight: bold;
}

.groups {
  display: flex;
  padding-top: 3px;
}

.group {
  display: flex;
  flex-direction: column;
  align-items: center;
  height: 51px;
  padding: 0 10px;
  border-right: 2px solid #ddd;
}

.group:first-child {
  padding-left: 0;
}

.group.single {
  padding: 0 12px;
}

.group:last-child {
  border-right: none;
}

.tools {
  display: flex;
  flex: none;
  align-items: center;
  gap: 11px;
  height: 34px;
}

.tools svg {
  width: 32px;
  height: 32px;
}

.tools .select-tool {
  background: #0696d7;
}

.select-tool svg {
  width: 38px;
  height: 38px;
}

.group-label {
  flex: none;
  gap: 4px;
  margin-top: 5px;
  line-height: 14px;
}

/* viewport */
.viewport {
  position: relative;
  flex: 1;
  min-height: 600px;
  background: #fff;
}

.scene {
  position: absolute;
  width: 100%;
  height: 100%;
}

.panel {
  position: absolute;
  left: 4px;
  width: 300px;
}

.browser {
  top: 4px;
}

.comments {
  bottom: 4px;
}

.panel-head {
  display: flex;
  align-items: center;
  height: 25px;
  padding: 0 11px 0 4px;
  border: 1px solid #c8c8c8;
  background: #f0f0f0;
  color: #555;
}

.panel-head h2 {
  flex: 1;
  margin-left: 10px;
  font-family: Roboto, Arial, sans-serif;
  font-size: 11px;
}

.comments .panel-head {
  border-top: none;
}

.comments h2 {
  margin-left: 20px;
}

.tree {
  padding: 3px 0 0 16px;
}

.tree ul {
  padding-left: 18px;
}

.row {
  display: flex;
  align-items: center;
  height: 24px;
}

.arrow {
  width: 20px;
  padding-left: 1px;
}

.node {
  display: flex;
  align-items: center;
  gap: 9px;
  height: 20px;
  padding: 0 9px 0 3px;
  background: #f1f1f1;
}

.node span {
  margin-left: 5px;
}

.settings {
  color: #888;
}

.node .settings + span {
  margin-left: 4px;
}

.node.root {
  gap: 6px;
  padding-right: 8px;
}

.node .root-name {
  display: flex;
  align-items: center;
  gap: 14px;
  height: 16px;
  margin: 0;
  padding: 0 13px 0 3px;
  background: #969696;
  color: #fff;
  font-weight: bold;
}

.root input {
  appearance: none;
  width: 13px;
  height: 13px;
  margin: 0;
  border: 1px solid #333;
  border-radius: 50%;
  background: radial-gradient(#333 0 2px, #fff 3px);
}

.viewcube {
  position: absolute;
  top: 20px;
  right: 19px;
}

.cube-face {
  fill: #8b8b8b;
  font-size: 10px;
  font-weight: bold;
}

.cube-face.bottom {
  font-size: 6px;
}

.axis-y {
  fill: #80f880;
  font-size: 11px;
}

.axis-x {
  fill: #ff8080;
  font-size: 11px;
}

.navbar {
  position: absolute;
  left: 50%;
  bottom: 6px;
  display: flex;
  align-items: center;
  gap: 11px;
  height: 24px;
  padding: 0 4px 0 3px;
  background: #f0f0f0;
  transform: translateX(-50%);
}

.navbar .menu {
  gap: 3px;
  margin-right: -4px;
}

.navbar .menu:last-child {
  margin-right: 0;
}

.assistant {
  position: absolute;
  right: 12px;
  bottom: 8px;
}

/* timeline */
.timeline {
  display: flex;
  height: 47px;
  border-top: 1px solid #d0d0d0;
  background: #f0f0f0;
}

.playback {
  display: flex;
  gap: 13px;
  width: 142px;
  height: 47px;
  padding-left: 11px;
}

.features {
  display: flex;
  align-self: flex-start;
  padding-top: 11px;
}

.features button {
  position: relative;
  width: 24px;
  height: 30px;
  padding-bottom: 6px;
}

.features svg {
  width: 16px;
  height: 16px;
}

/* rail under the features, with a tick for each */
.features button::before,
.features button::after {
  content: "";
  position: absolute;
  bottom: 0;
  background: #c8c8c8;
}

.features button::before {
  left: 0;
  right: 0;
  height: 2px;
}

.features button:first-child::before {
  left: 12px;
}

.features button:last-child::before {
  right: 10px;
}

.features button::after {
  left: 12px;
  width: 2px;
  height: 6px;
}

.features .error {
  background: linear-gradient(#ff4444, #ff4444) 0 0 / 24px 24px no-repeat;
}

.features .rolled-back svg {
  opacity: .25;
}

.marker {
  position: absolute;
  z-index: 1;
  top: -2px;
  right: -6px;
  width: 12px;
  height: 32px;
  background: linear-gradient(#555, #555) 50% 0 / 2px 100% no-repeat;
}

.marker::before {
  content: "";
  display: block;
  height: 8px;
  background: #555;
  clip-path: polygon(0 0, 100% 0, 100% 50%, 60% 100%, 40% 100%, 0 50%);
}

.timeline-settings {
  width: 15px;
  height: 46px;
  margin: 0 14px 0 auto;
  color: #888;
}
```
